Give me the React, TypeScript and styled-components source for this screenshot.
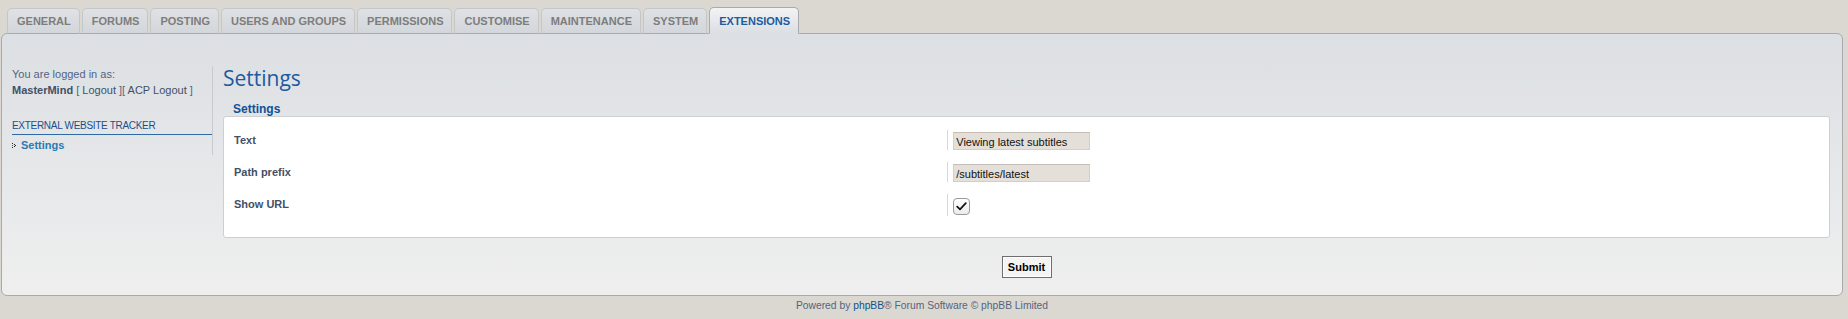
import React from "react";
import styled, { createGlobalStyle } from "styled-components";

const Global = createGlobalStyle`
  html, body { margin: 0; padding: 0; }
  body {
    background: #dbd8d1;
    font-family: "Liberation Sans", Arial, sans-serif;
    font-size: 11px;
    color: #536482;
  }
`;

const Page = styled.div`
  padding: 7px 5px 0 1px;
`;

const TabBar = styled.ul`
  list-style: none;
  margin: 0 0 -1px 6px;
  padding: 0;
  display: flex;
  align-items: flex-end;
  gap: 2px;
  position: relative;
  z-index: 1;
`;

const Tab = styled.li<{ $active?: boolean }>`
  box-sizing: border-box;
  height: ${(p) => (p.$active ? "27px" : "26px")};
  padding: ${(p) => (p.$active ? "1px" : "0")} 8px 0 9px;
  display: flex;
  align-items: center;
  justify-content: center;
  border: 1px solid ${(p) => (p.$active ? "#a9aaad" : "#c4c6c9")};
  border-bottom: 1px solid ${(p) => (p.$active ? "#dcdfe3" : "#a9aaad")};
  border-radius: 5px 5px 0 0;
  background: ${(p) =>
    p.$active
      ? "linear-gradient(#f2f3f5, #dcdfe3)"
      : "linear-gradient(#dfe1e4, #d3d6da)"};
  color: ${(p) => (p.$active ? "#1d5b9f" : "#7d7d7d")};
  font-weight: bold;
  font-size: 11px;
  text-transform: uppercase;
  white-space: nowrap;
`;

const Panel = styled.div`
  box-sizing: border-box;
  border: 1px solid #a9aaad;
  border-radius: 6px;
  background: linear-gradient(#dcdfe3, #efefef);
  padding: 30px 12px 17px 0;
  display: flex;
  align-items: flex-start;
`;

const Sidebar = styled.div`
  box-sizing: border-box;
  width: 211px;
  flex: none;
  margin-top: 2px;
  padding: 0 0 2px 10px;
  border-right: 1px solid #c8cacd;
`;

const LoggedIn = styled.p`
  margin: 0;
  line-height: 16px;
  color: #536482;
`;

const UserName = styled.strong`
  color: #425067;
`;

const SideLink = styled.a`
  color: #425067;
  text-decoration: none;
`;

const MenuHeader = styled.div`
  margin-top: 21px;
  line-height: 14px;
  padding-bottom: 1px;
  font-size: 10px;
  letter-spacing: -0.3px;
  text-transform: uppercase;
  color: #1c4f8a;
  border-bottom: 1px solid #2f6aa6;
`;

const MenuItem = styled.a`
  display: flex;
  align-items: center;
  gap: 5px;
  line-height: 16px;
  margin-top: 2px;
  font-weight: bold;
  color: #2a7ab5;
  text-decoration: none;
`;

const Main = styled.div`
  flex: 1;
  padding-left: 10px;
  display: flex;
  flex-direction: column;
`;

const Title = styled.h1`
  margin: 0;
  font-family: "Open Sans", "Noto Sans", sans-serif;
  font-weight: normal;
  font-size: 21px;
  line-height: 28px;
  color: #1c5a9f;
`;

const Legend = styled.div`
  margin: 10px 0 0 10px;
  font-weight: bold;
  font-size: 12px;
  line-height: 14px;
  color: #115098;
`;

const Box = styled.div`
  box-sizing: border-box;
  background: #ffffff;
  border: 1px solid #cfcfcf;
  border-radius: 3px;
  padding: 8px 10px 16px;
`;

const Row = styled.div`
  display: flex;
  align-items: flex-start;
  height: 32px;
  box-sizing: border-box;
  padding-top: 5px;
`;

const Label = styled.div`
  width: 45%;
  line-height: 20px;
  font-weight: bold;
  color: #425067;
`;

const Value = styled.div<{ $tall?: boolean }>`
  flex: 1;
  min-height: ${(p) => (p.$tall ? "22px" : "20px")};
  border-left: 1px solid #d8d8d8;
  padding: 2px 0 0 5px;
  box-sizing: border-box;
  display: flex;
  align-items: flex-start;
`;

const TextInput = styled.input`
  box-sizing: border-box;
  width: 137px;
  height: 18px;
  margin: 0;
  padding: 1px 2px 0;
  border: 1px solid #d3cec6;
  border-top-color: #c4bfb6;
  background: #e4e0d9;
  font-family: "Liberation Sans", Arial, sans-serif;
  font-size: 11px;
  color: #111;
  outline: none;
`;

const CheckBox = styled.span`
  box-sizing: border-box;
  width: 17px;
  height: 17px;
  margin-top: 2px;
  border: 1px solid #9a9a9a;
  border-radius: 4px;
  background: linear-gradient(#ffffff, #ececec);
  display: flex;
  align-items: center;
  justify-content: center;
`;

const Actions = styled.div`
  display: flex;
  justify-content: center;
  margin-top: 18px;
`;

const SubmitButton = styled.button`
  box-sizing: border-box;
  width: 50px;
  height: 22px;
  padding: 0;
  border: 1px solid #6e6e6e;
  box-shadow: inset 0 0 0 1px #ffffff;
  background: #f4f4f4;
  font-family: "Liberation Sans", Arial, sans-serif;
  font-weight: bold;
  font-size: 11px;
  color: #000;
`;

const Footer = styled.div`
  margin-top: 3px;
  text-align: center;
  line-height: 14px;
  font-size: 10.3px;
  color: #536482;
`;

const FooterLink = styled.a`
  color: #105289;
  text-decoration: none;
`;

const tabs = [
  "General",
  "Forums",
  "Posting",
  "Users and groups",
  "Permissions",
  "Customise",
  "Maintenance",
  "System",
  "Extensions",
];

const Bullet = () => (
  <svg width="4" height="5" viewBox="0 0 4 5">
    <rect x="0" y="0" width="1" height="1" fill="#222" />
    <rect x="2" y="1" width="1" height="1" fill="#222" />
    <rect x="3" y="2" width="1" height="1" fill="#222" />
    <rect x="0" y="2" width="1" height="1" fill="#555" />
    <rect x="2" y="3" width="1" height="1" fill="#222" />
    <rect x="0" y="4" width="1" height="1" fill="#222" />
  </svg>
);

const Check = () => (
  <svg width="11" height="9" viewBox="0 0 11 9">
    <path d="M1.2 4.6 L4 7.4 L9.8 1.2" fill="none" stroke="#111" strokeWidth="1.7" strokeLinecap="round" strokeLinejoin="round" />
  </svg>
);

export default function App() {
  return (
    <Page>
      <Global />
      <TabBar>
        {tabs.map((t) => (
          <Tab key={t} $active={t === "Extensions"}>
            {t}
          </Tab>
        ))}
      </TabBar>
      <Panel>
        <Sidebar>
          <LoggedIn>You are logged in as:</LoggedIn>
          <LoggedIn>
            <UserName>MasterMind</UserName> [ <SideLink href="#">Logout</SideLink> ][{" "}
            <SideLink href="#">ACP Logout</SideLink> ]
          </LoggedIn>
          <MenuHeader>External website tracker</MenuHeader>
          <MenuItem href="#">
            <Bullet />
            Settings
          </MenuItem>
        </Sidebar>
        <Main>
          <Title>Settings</Title>
          <Legend>Settings</Legend>
          <Box>
            <Row>
              <Label>Text</Label>
              <Value>
                <TextInput defaultValue="Viewing latest subtitles" />
              </Value>
            </Row>
            <Row>
              <Label>Path prefix</Label>
              <Value>
                <TextInput defaultValue="/subtitles/latest" />
              </Value>
            </Row>
            <Row>
              <Label>Show URL</Label>
              <Value $tall>
                <CheckBox>
                  <Check />
                </CheckBox>
              </Value>
            </Row>
          </Box>
          <Actions>
            <SubmitButton>Submit</SubmitButton>
          </Actions>
        </Main>
      </Panel>
      <Footer>
        Powered by <FooterLink href="#">phpBB</FooterLink>® Forum Software © phpBB Limited
      </Footer>
    </Page>
  );
}
